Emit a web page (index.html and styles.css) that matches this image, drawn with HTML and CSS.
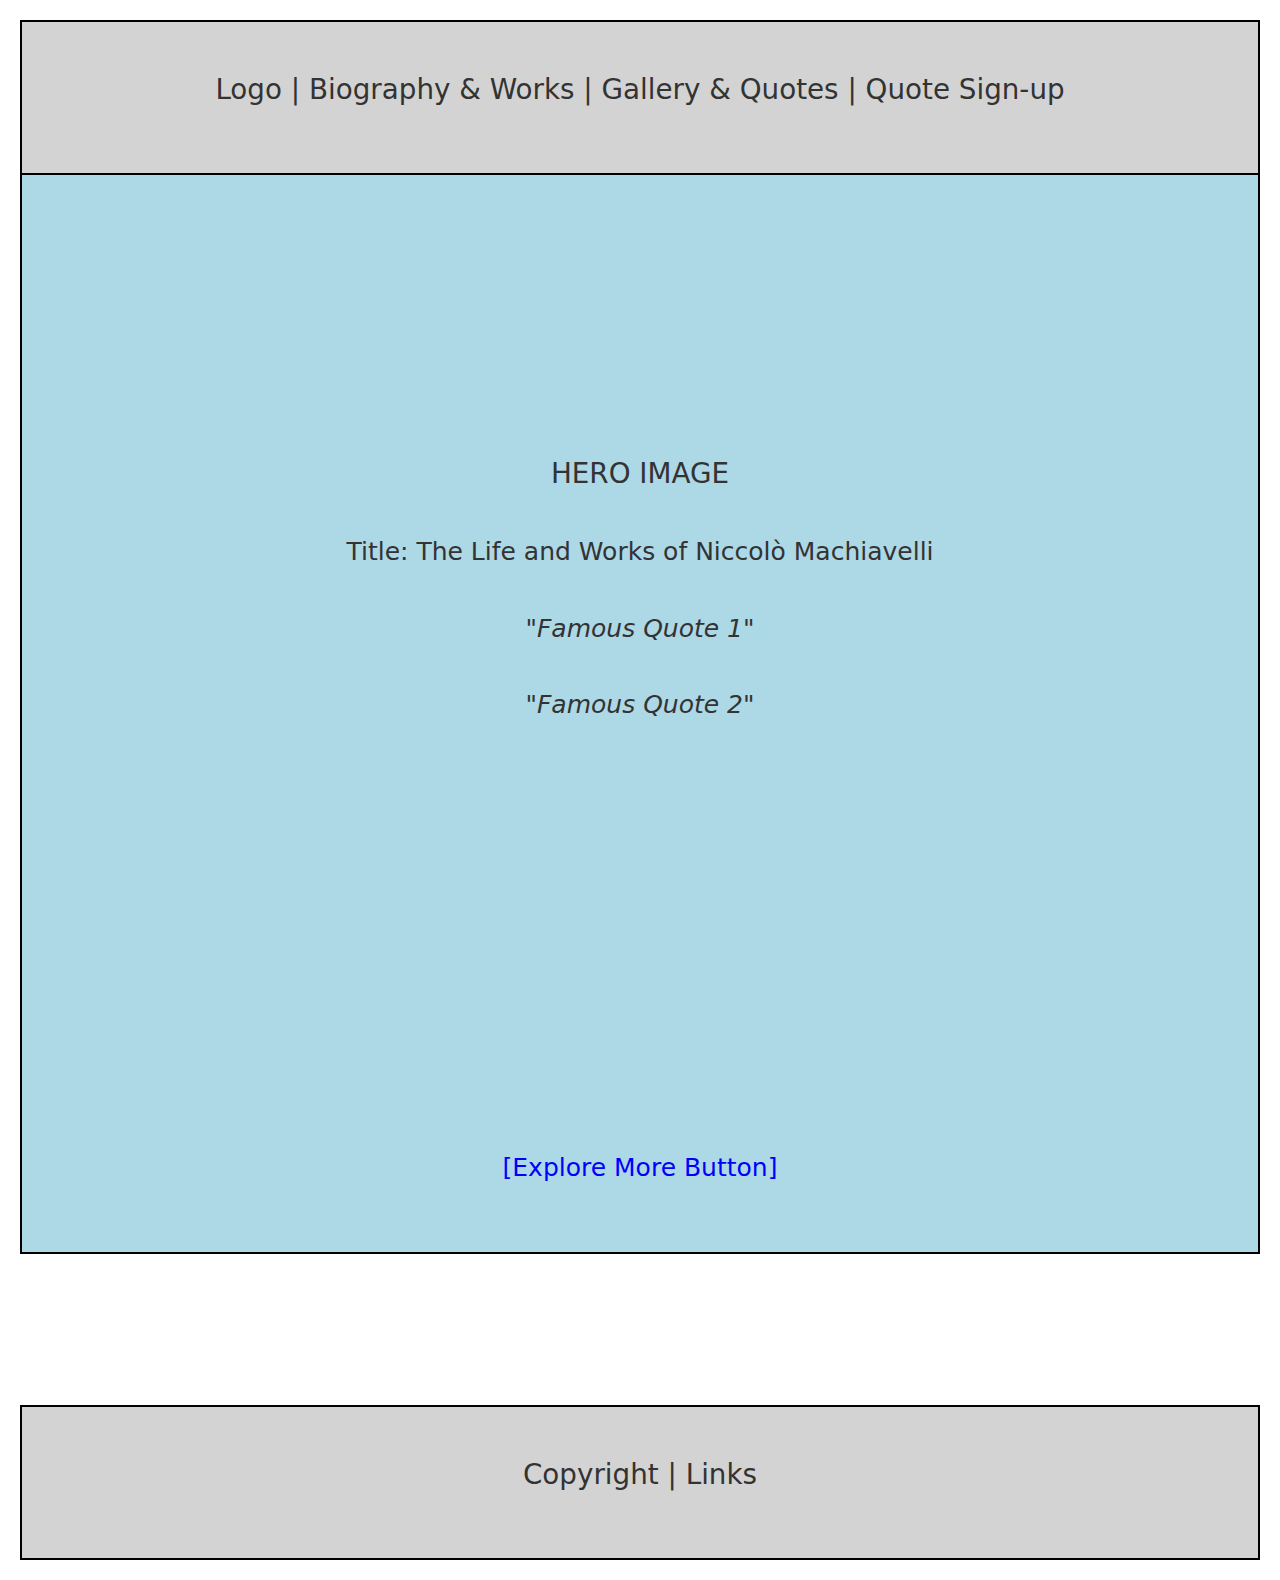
FILE: index.html
```html
<!DOCTYPE html>
<html lang="en">
<head>
<meta charset="utf-8">
<title>Niccolò Machiavelli</title>
<link rel="stylesheet" href="styles.css">
</head>
<body>
<div class="page">
  <header class="site-header">
    <nav class="nav-line">Logo | Biography &amp; Works | Gallery &amp; Quotes | Quote Sign-up</nav>
  </header>
  <section class="hero">
    <div class="hero-label">HERO IMAGE</div>
    <div class="hero-title">Title: The Life and Works of Niccolò Machiavelli</div>
    <div class="hero-quote q1">"<em>Famous Quote 1</em>"</div>
    <div class="hero-quote q2">"<em>Famous Quote 2</em>"</div>
    <div class="hero-button">[Explore More Button]</div>
  </section>
  <footer class="site-footer">
    <div class="footer-line">Copyright | Links</div>
  </footer>
</div>
</body>
</html>
```
FILE: styles.css
```css
html, body {
  margin: 0;
  padding: 0;
  background: #ffffff;
}
body {
  font-family: "DejaVu Sans", "Liberation Sans", sans-serif;
  color: #333333;
}
.page {
  padding: 20px;
  display: flex;
  flex-direction: column;
}
.site-header {
  box-sizing: border-box;
  height: 155px;
  background: #d3d3d3;
  border: 2px solid #000;
  padding-top: 48px;
  text-align: center;
}
.nav-line, .footer-line, .hero-label {
  font-size: 27.78px;
  line-height: 40px;
}
.hero {
  box-sizing: border-box;
  height: 1079px;
  background: #add8e6;
  border: 2px solid #000;
  border-top: none;
  padding-top: 279px;
  padding-bottom: 64px;
  display: flex;
  flex-direction: column;
  text-align: center;
}
.hero-title, .hero-quote, .hero-button {
  font-size: 25px;
  line-height: 40px;
}
.hero-title { margin-top: 38px; }
.q1 { margin-top: 37px; }
.q2 { margin-top: 36px; }
.hero-quote em { font-style: italic; }
.hero-button {
  margin-top: auto;
  color: #0000ff;
}
.site-footer {
  box-sizing: border-box;
  height: 155px;
  margin-top: 151px;
  background: #d3d3d3;
  border: 2px solid #000;
  padding-top: 48px;
  text-align: center;
}
```
